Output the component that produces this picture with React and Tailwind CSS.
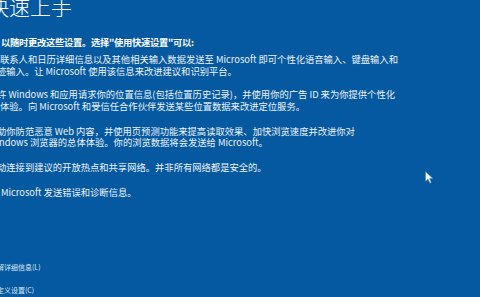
const font = { fontFamily: '"Noto Sans CJK SC", "Noto Sans", sans-serif' };

const Cursor = () => (
  <svg className="absolute left-[425px] top-[171px]" width="9" height="13" viewBox="0 0 9 13">
    <path d="M0.5 0.5 L0.5 10.5 L3 8.2 L4.8 12.2 L6.3 11.5 L4.6 7.6 L8 7.6 Z" fill="#eef3fa" stroke="#4a7fb8" strokeWidth="0.6" />
  </svg>
);

const Line = ({ children, className = "" }) => (
  <div className={"whitespace-nowrap h-[11.5px] leading-[11.5px] text-[9.3px] " + className}>{children}</div>
);

export default function App() {
  return (
    <div className="relative w-[480px] h-[297px] overflow-hidden bg-[#0459a0] text-[#eef3f9]" style={font}>
      <div className="flex flex-col">
        <div className="-mt-[4px] -ml-[12px] h-[21px] leading-[21px] text-[21px] font-light text-white whitespace-nowrap">
          快速上手
        </div>

        <Line className="mt-[20px] ml-[1px] font-bold text-white tracking-[-0.3px]">以随时更改这些设置。选择"使用快速设置"可以:</Line>

        <Line className="mt-[5.5px]">联系人和日历详细信息以及其他相关输入数据发送至 Microsoft 即可个性化语音输入、键盘输入和</Line>
        <Line className="-ml-[3px]">迹输入。让 Microsoft 使用该信息来改进建议和识别平台。</Line>

        <Line className="mt-[12px] -ml-[3px]">许 Windows 和应用请求你的位置信息(包括位置历史记录)，并使用你的广告 ID 来为你提供个性化</Line>
        <Line>体验。向 Microsoft 和受信任合作伙伴发送某些位置数据来改进定位服务。</Line>

        <Line className="mt-[13.5px] -ml-[3px]">助你防范恶意 Web 内容，并使用页预测功能来提高读取效果、加快浏览速度并改进你对</Line>
        <Line className="-ml-[1px]">ndows 浏览器的总体体验。你的浏览数据将会发送给 Microsoft。</Line>

        <Line className="mt-[13px] -ml-[3px]">动连接到建议的开放热点和共享网络。并非所有网络都是安全的。</Line>

        <Line className="mt-[13.5px] ml-[1px]">Microsoft 发送错误和诊断信息。</Line>

        <div className="mt-[63.5px] -ml-[3px] h-[11.5px] leading-[11.5px] text-[7px] whitespace-nowrap text-[#dbe7f4]">解详细信息(L)</div>
        <div className="mt-[11.5px] -ml-[3px] h-[11.5px] leading-[11.5px] text-[7px] whitespace-nowrap text-[#dbe7f4]">定义设置(C)</div>
      </div>
      <Cursor />
    </div>
  );
}
